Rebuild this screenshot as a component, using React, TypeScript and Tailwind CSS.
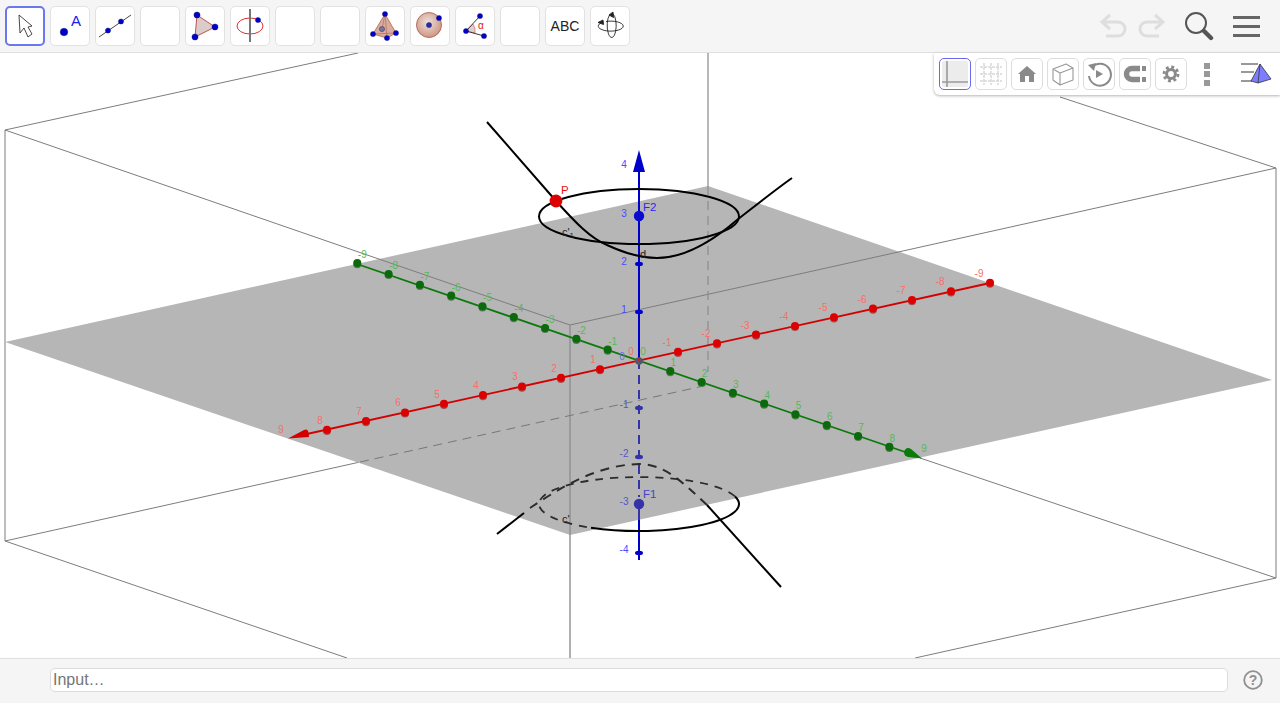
import type { ReactNode } from 'react'

const BLUE = '#0000cc'
const SANS = '"Liberation Sans", Arial, sans-serif'

function Dot({ x, y, r = 3.1, fill = BLUE }: { x: number; y: number; r?: number; fill?: string }) {
    return <circle cx={x} cy={y} r={r} fill={fill} stroke="#1a1a66" strokeWidth={0.4} />
}

function Icon({ children }: { children?: ReactNode }) {
    return (
        <svg viewBox="0 0 38 38" className="w-[38px] h-[38px]">
            <g transform="translate(-1 -1)">{children}</g>
        </svg>
    )
}

const tools: ReactNode[] = [
    // Move
    <path key="move" d="M14 9 L15 27 L19 22 L23 31 L27 28 L23 21 L27 20 Z" fill="#fff" stroke="#333" strokeWidth={0.9} strokeLinejoin="round" />,
    // Point
    <g key="point">
        <Dot x={14} y={26} r={3.8} />
        <text x={21} y={20} fontSize={15} fill="#1a1aee" fontFamily={SANS}>A</text>
    </g>,
    // Line
    <g key="line">
        <line x1={4} y1={31} x2={36} y2={9} stroke="#333" strokeWidth={0.9} />
        <Dot x={13} y={24.5} r={2.6} />
        <Dot x={26} y={15.5} r={2.6} />
    </g>,
    null,
    // Polygon
    <g key="polygon">
        <path d="M12 9 L30 21 L10 31 Z" fill="#dcccc9" stroke="#b5443c" strokeWidth={0.9} />
        <Dot x={12} y={9} />
        <Dot x={30} y={21} />
        <Dot x={10} y={31} />
    </g>,
    // Circle around axis
    <g key="circle">
        <ellipse cx={20} cy={20} rx={13} ry={8} fill="none" stroke="#e03030" strokeWidth={1} />
        <line x1={20} y1={3} x2={20} y2={36} stroke="#777" strokeWidth={2} />
        <Dot x={28} y={14} r={2.6} />
    </g>,
    null,
    null,
    // Pyramid
    <g key="pyramid">
        <path d="M20 8 L8 28 L22 32 L31 27 Z" fill="#d8ab9a" stroke="#b5604c" strokeWidth={0.8} />
        <path d="M20 8 L22 32 M8 28 L31 27 M20 8 L17 23" stroke="#b5604c" strokeWidth={0.6} fill="none" />
        <Dot x={17} y={23} r={2.6} fill="#77779a" />
        <Dot x={20} y={8} r={2.6} />
        <Dot x={8} y={28} r={2.6} />
        <Dot x={31} y={27} r={2.6} />
        <Dot x={22} y={32} r={2.6} />
    </g>,
    // Sphere
    <g key="sphere">
        <defs>
            <radialGradient id="sphereFill" cx="45%" cy="40%" r="60%">
                <stop offset="0%" stopColor="#ece2dd" />
                <stop offset="100%" stopColor="#cf9682" />
            </radialGradient>
        </defs>
        <circle cx={19} cy={19} r={12.5} fill="url(#sphereFill)" stroke="#a8574a" strokeWidth={0.8} />
        <Dot x={19} y={19} r={2.6} fill="#2a2aaa" />
        <Dot x={29} y={12} r={2.6} />
    </g>,
    // Angle
    <g key="angle">
        <path d="M11 25 L18 18 A12 12 0 0 1 20 27 Z" fill="#e0cfcc" stroke="#d05050" strokeWidth={0.6} />
        <path d="M25 10 L11 25 L29 30" fill="none" stroke="#222" strokeWidth={0.9} />
        <text x={23} y={23} fontSize={10} fill="#e02020" fontFamily={SANS}>α</text>
        <Dot x={11} y={25} r={2.6} />
        <Dot x={25} y={10} r={2.6} />
        <Dot x={29} y={30} r={2.6} />
    </g>,
    null,
    // Text
    <text key="text" x={20} y={25} fontSize={14} textAnchor="middle" fill="#222" fontFamily={SANS}>ABC</text>,
    // Rotate
    <g key="rotate" fill="none" stroke="#222" strokeWidth={0.9}>
        <path d="M23 8 A4.5 12 0 1 1 19.5 9" />
        <path d="M11 17 A12.5 5 0 1 0 16 15.5" />
        <path d="M23 6 L19 9 L23.5 11.5 Z" fill="#222" />
        <path d="M8 16.5 L13 14 L13.5 18.5 Z" fill="#222" />
    </g>,
]

function StyleIcon({ children }: { children?: ReactNode }) {
    return (
        <svg viewBox="0 0 30 30" className="w-[30px] h-[30px]">
            <g transform="translate(-1 -1)">{children}</g>
        </svg>
    )
}

const styleButtons: { key: string; active?: boolean; icon: ReactNode }[] = [
    {
        key: 'axes',
        active: true,
        icon: (
            <g>
                <rect x={3} y={3} width={26} height={26} rx={2} fill="#ececec" />
                <path d="M8 3 V29 M3 24 H29" stroke="#9a9a9a" strokeWidth={1.6} />
            </g>
        ),
    },
    {
        key: 'grid',
        icon: <path d="M9 5 V27 M16 5 V27 M23 5 V27 M5 9 H27 M5 16 H27 M5 23 H27" stroke="#d8d8d8" strokeWidth={1.5} strokeDasharray="3 1" />,
    },
    {
        key: 'home',
        icon: <path d="M16 8 L25 16 H23 V24 H18 V18 H14 V24 H9 V16 H7 Z" fill="#8a8a8a" />,
    },
    {
        key: 'cube',
        icon: <path d="M6 11 L19 6 L26 10 V22 L13 27 L6 22 Z M6 11 L13 15 L26 10 M13 15 V27" fill="none" stroke="#999" strokeWidth={1.1} strokeLinejoin="round" />,
    },
    {
        key: 'view',
        icon: (
            <g>
                <path d="M9 9 A11 11 0 1 1 6 18" fill="none" stroke="#8a8a8a" strokeWidth={2} />
                <path d="M5 7 L13 5 L11 13 Z" fill="#8a8a8a" />
                <path d="M13 12 L20 16 L13 20 Z" fill="#8a8a8a" />
            </g>
        ),
    },
    {
        key: 'magnet',
        icon: (
            <g>
                <path d="M21 10.5 H13 A5.5 5.5 0 0 0 13 21.5 H21" fill="none" stroke="#8a8a8a" strokeWidth={5.5} />
                <path d="M23 8 H27 V13 H23 Z M23 19 H27 V24 H23 Z" fill="#8a8a8a" />
            </g>
        ),
    },
    {
        key: 'gear',
        icon: (
            <g fill="none" stroke="#8a8a8a">
                <circle cx={16} cy={16} r={4.4} strokeWidth={3} />
                <circle cx={16} cy={16} r={7} strokeWidth={2.8} strokeDasharray="2.9 2.6" />
            </g>
        ),
    },
]

// ticks along the x and y axes, worked out from the picture
const redTicks = Array.from({ length: 18 }, (_, i) => i - 9)
    .filter((n) => n !== 0)
    .map((n) => ({ n, x: 639 - 39 * n, y: 360.5 + 8.65 * n }))
const greenTicks = Array.from({ length: 18 }, (_, i) => i - 9)
    .filter((n) => n !== 0)
    .map((n) => ({ n, x: 639 + 31.3 * n, y: 360.3 + 10.8 * n }))
const blueTicks = [
    { n: 4, y: 164, label: 168, mark: false },
    { n: 3, y: 216, label: 217, mark: false },
    { n: 2, y: 264, label: 265, mark: true },
    { n: 1, y: 312, label: 313, mark: true },
    { n: -1, y: 408, label: 408, mark: true },
    { n: -2, y: 457, label: 457, mark: true },
    { n: -3, y: 504, label: 505, mark: false },
    { n: -4, y: 553, label: 553, mark: true },
]

function Scene() {
    return (
        <svg viewBox="0 53 1280 605" className="block w-full h-full" fontFamily={SANS}>
            {/* box, upper and back edges */}
            <g stroke="#7d7d7d" strokeWidth={1} fill="none">
                <path d="M5 130 L358 53" />
                <path d="M708 53 V186" strokeWidth={1.4} stroke="#9a9a9a" />
                <path d="M5 130 V541" />
                <path d="M1276 168 V578" />
                <path d="M1060 97 L1276 168" />
                <path d="M5 541 L347 658" />
                <path d="M1276 578 L915 658" />
                <path d="M920 458 L1276 578" />
                <path d="M5 541 L360 462" />
            </g>

            <polygon points="5,342 708,186 1272,380 570,535" fill="#b6b6b6" />

            {/* edges over the plane */}
            <g fill="none">
                <path d="M5 130 L570 325" stroke="#7d7d7d" />
                <path d="M570 325 L1276 168" stroke="#7d7d7d" />
                <path d="M570 325 V658" stroke="#8f8f8f" strokeWidth={1.4} />
                <path d="M708 186 V372" stroke="#8c8c8c" strokeWidth={1.2} strokeDasharray="9 6" />
                <path d="M360 462 L708 385" stroke="#777" strokeWidth={1} strokeDasharray="9 6" />
            </g>

            {/* red axis */}
            <line x1={990} y1={283} x2={300} y2={435.5} stroke="#d40000" strokeWidth={1.8} />
            <path d="M288 438.5 L304 430 Q308 428 308.5 433 L309 437 Z" fill="#d40000" />
            {redTicks.filter((t) => t.n !== 9).map((t) => (
                <g key={t.n}>
                    <circle cx={t.x} cy={t.y + 1.2} r={4} fill="#a05050" />
                    <circle cx={t.x} cy={t.y} r={4} fill="#dd0000" />
                    <text x={t.n > 0 ? t.x - 7 : t.x - 11} y={t.y - 6} fontSize={10} textAnchor="middle" fill="#ff6a6a">{t.n}</text>
                </g>
            ))}
            <text x={281} y={433} fontSize={10} textAnchor="middle" fill="#ff6a6a">9</text>
            <text x={631} y={355} fontSize={10} textAnchor="middle" fill="#ff6a6a">0</text>

            {/* green axis */}
            <line x1={357} y1={264} x2={908} y2={453} stroke="#0a7a0a" strokeWidth={1.8} />
            <path d="M922 458.5 L911 449 Q906 446 904 452 Q904 456 908 457 Z" fill="#0a7a0a" />
            {greenTicks.filter((t) => t.n !== 9).map((t) => (
                <g key={t.n}>
                    <circle cx={t.x} cy={t.y + 1.2} r={4} fill="#4f7a4f" />
                    <circle cx={t.x} cy={t.y} r={4} fill="#0b6a0b" />
                    <text x={t.n > 0 ? t.x + 3 : t.x + 5} y={t.y - 5} fontSize={10} textAnchor="middle" fill="#58b858">{t.n}</text>
                </g>
            ))}
            <text x={924} y={452} fontSize={10} textAnchor="middle" fill="#58b858">9</text>
            <text x={643} y={355} fontSize={10} textAnchor="middle" fill="#58b858">0</text>

            {/* blue axis */}
            <line x1={639} y1={170} x2={639} y2={360} stroke={BLUE} strokeWidth={2} />
            <path d="M639 150 L645 172 H633 Z" fill={BLUE} />
            <line x1={639} y1={360} x2={639} y2={497} stroke="#3434a8" strokeWidth={2} strokeDasharray="9 6" />
            <line x1={639} y1={505} x2={639} y2={520} stroke="#3434a8" strokeWidth={2} />
            <line x1={639} y1={520} x2={639} y2={560} stroke={BLUE} strokeWidth={2} />
            {blueTicks.map((t) => (
                <g key={t.n}>
                    {t.mark && <ellipse cx={639} cy={t.y} rx={4} ry={2.2} fill={t.y > 360 && t.y < 520 ? '#3434a8' : BLUE} />}
                    <text x={624} y={t.label} fontSize={10} textAnchor="middle" fill={t.n < 0 && t.n > -4 ? '#5555c8' : '#4a4aff'}>{t.n}</text>
                </g>
            ))}
            <text x={622} y={360} fontSize={10} textAnchor="middle" fill="#6a6aff">0</text>
            <circle cx={639} cy={361} r={3.8} fill="#4a5a70" />
            <circle cx={639} cy={359.5} r={1.5} fill="#cc2020" />

            {/* lower conic */}
            <g fill="none" stroke="#000">
                <path d="M591 527.7 A100 27 0 0 0 735 496.4" strokeWidth={2} />
                <path d="M735 496.4 A100 27 0 1 0 591 527.7" stroke="#2c2c2c" strokeWidth={1.8} strokeDasharray="8 7" />
                <path d="M497 534 L524 513" strokeWidth={2} />
                <path d="M530 508 C560 488 596 465 639 464 C665 464 682 482 707 505" stroke="#2c2c2c" strokeWidth={2} strokeDasharray="9 7" />
                <path d="M707 505 L781 587" strokeWidth={2} />
            </g>

            {/* upper conic */}
            <g fill="none" stroke="#000" strokeWidth={2}>
                <ellipse cx={639} cy={216.5} rx={100} ry={27.5} />
                <path d="M487 122 L556 201 C575 222 590 238 607 245 C622 252 640 258 657 258 C680 258 708 245 737 220 C755 206 775 190 792 178" />
            </g>

            <circle cx={639} cy={216} r={5.2} fill="#0a0ad0" />
            <circle cx={639} cy={504} r={5.2} fill="#3434a8" />
            <circle cx={556} cy={201} r={6.4} fill="#dd0000" />

            <text x={643} y={211} fontSize={11.5} fill="#2a2aee">F2</text>
            <text x={643} y={498} fontSize={11.5} fill="#4444c0">F1</text>
            <text x={561} y={194} fontSize={11.5} fill="#ee1111">P</text>
            <text x={640} y={258} fontSize={11} fill="#222">d</text>
            <text x={562} y={236} fontSize={11} fill="#222">c'<tspan fontSize={8} dy={2}>1</tspan></text>
            <text x={562} y={523} fontSize={11} fill="#222">c'</text>
        </svg>
    )
}

export default function App() {
    return (
        <div className="w-full h-[703px] flex flex-col bg-white overflow-hidden font-['Liberation_Sans',Arial,sans-serif]">
            {/* Toolbar */}
            <div className="h-[53px] shrink-0 flex items-start pt-[6px] pl-[5px] pr-[20px] gap-[5px] bg-[#f5f5f5] border-b border-[#e0e0e0]">
                {tools.map((tool, i) => (
                    <button
                        key={i}
                        className={`w-[40px] h-[40px] rounded-[5px] bg-white flex items-center justify-center ${i === 0 ? 'border-2 border-[#6a78f0]' : 'border border-[#e2e2e2]'}`}
                    >
                        {i === 0 ? (
                            <svg viewBox="0 0 36 36" className="w-[36px] h-[36px]">
                                <g transform="translate(-2 -2)">{tool}</g>
                            </svg>
                        ) : (
                            <Icon>{tool}</Icon>
                        )}
                    </button>
                ))}

                <div className="ml-auto flex items-center h-[40px]">
                    <svg viewBox="0 0 30 26" className="w-[30px] h-[26px]">
                        <path d="M4 9 H19 A7 7 0 0 1 19 23 H7" fill="none" stroke="#dedede" strokeWidth={3} />
                        <path d="M11 2 L3 9 L11 16" fill="none" stroke="#dedede" strokeWidth={3} />
                    </svg>
                    <svg viewBox="0 0 30 26" className="w-[30px] h-[26px] ml-[7px]">
                        <path d="M26 9 H11 A7 7 0 0 0 11 23 H23" fill="none" stroke="#dedede" strokeWidth={3} />
                        <path d="M19 2 L27 9 L19 16" fill="none" stroke="#dedede" strokeWidth={3} />
                    </svg>
                    <svg viewBox="0 0 30 30" className="w-[30px] h-[30px] ml-[18px]">
                        <circle cx={12} cy={12} r={10} fill="none" stroke="#555" strokeWidth={2} />
                        <path d="M20 20 L27 27" stroke="#555" strokeWidth={4.4} strokeLinecap="round" />
                    </svg>
                    <div className="ml-[19px] w-[27px] flex flex-col gap-[6px]">
                        <div className="h-[3px] bg-[#666]" />
                        <div className="h-[3px] bg-[#666]" />
                        <div className="h-[3px] bg-[#666]" />
                    </div>
                </div>
            </div>

            {/* 3D view */}
            <div className="relative flex-1 min-h-0">
                <Scene />
                <div className="absolute top-0 right-0 w-[346px] h-[42px] flex items-center pl-[5px] gap-[4px] bg-white rounded-bl-[6px] shadow-[0_1px_3px_rgba(0,0,0,0.3)]">
                    {styleButtons.map((b) => (
                        <button
                            key={b.key}
                            className={`w-[32px] h-[32px] rounded-[5px] bg-white flex items-center justify-center border ${b.active ? 'border-[#6a6af0]' : 'border-[#dddddd]'}`}
                        >
                            <StyleIcon>{b.icon}</StyleIcon>
                        </button>
                    ))}
                    <div className="ml-[13px] w-[6px] flex flex-col gap-[2.5px]">
                        <div className="h-[6px] bg-[#999]" />
                        <div className="h-[6px] bg-[#999]" />
                        <div className="h-[6px] bg-[#999]" />
                    </div>
                    <svg viewBox="0 0 34 24" className="w-[34px] h-[24px] ml-[26px]">
                        <path d="M1 2 H18 M1 10 H14 M1 19 H12" stroke="#999" strokeWidth={2} />
                        <path d="M20 2 L11 19 L18 21 L31 17 Z" fill="#7d7dff" stroke="#333" strokeWidth={0.8} strokeLinejoin="round" />
                        <path d="M20 2 L18 21" stroke="#333" strokeWidth={0.8} />
                    </svg>
                </div>
            </div>

            {/* Input bar */}
            <div className="h-[45px] shrink-0 flex items-center pl-[50px] pr-[17px] pb-[2px] bg-[#f5f5f5] border-t border-[#e0e0e0]">
                <input
                    placeholder="Input…"
                    className="w-[1178px] h-[24px] pl-[2px] text-base bg-white rounded-[5px] border border-[#dcdcdc] outline-none placeholder:text-[#757575]"
                />
                <svg viewBox="0 0 20 20" className="w-[20px] h-[20px] ml-auto">
                    <circle cx={10} cy={10} r={8.8} fill="none" stroke="#8f8f8f" strokeWidth={1.8} />
                    <text x={10} y={15} fontSize={14} fontWeight={700} textAnchor="middle" fill="#8f8f8f" fontFamily={SANS}>?</text>
                </svg>
            </div>
        </div>
    )
}
